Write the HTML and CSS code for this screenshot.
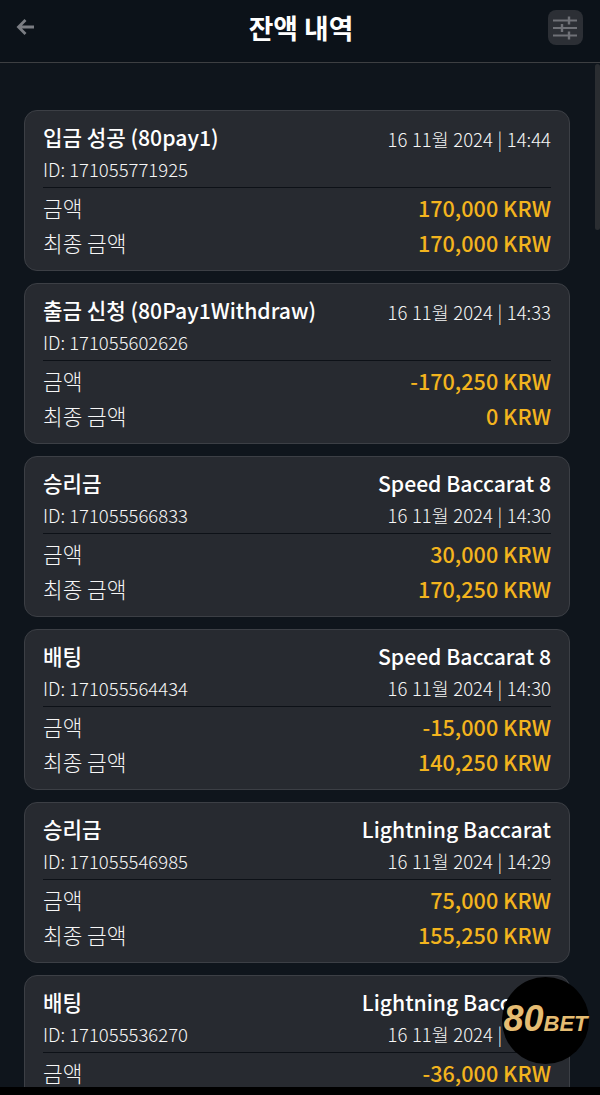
FILE: index.html
```html
<!DOCTYPE html>
<html>
	<head>
		<meta charset="UTF-8">
		<title>잔액 내역</title>
		<link rel="stylesheet" href="styles.css">
	</head>
	<body>
		<div class="page">
			<div class="header">
				<a class="back" href="#">
					<svg width="22" height="20" viewBox="0 0 22 20"><path d="M19 10H4M10.500 3L3.500 10L10.500 17" fill="none" stroke="#7b7d83" stroke-width="2.800"/></svg>
				</a>
				<h1>잔액 내역</h1>
				<a class="filter" href="#">
					<svg width="24" height="24" viewBox="0 0 24 24" fill="none" stroke="#6f7177" stroke-width="2">
						<path d="M0 4.500H24M0 12H24M0 19.500H24"/>
						<path d="M16 0.500V8.500M9 8V16M16 15.500V23.500" stroke-width="2.400"/>
					</svg>
				</a>
			</div>
			<div class="list">
				<div class="card">
					<div class="top">
						<div class="name">입금 성공 (80pay1)</div>
						<div class="date first">16 11월 2024 | 14:44</div>
					</div>
					<div class="id">ID: 171055771925</div>
					<div class="row"><span>금액</span><b>170,000 KRW</b></div>
					<div class="row"><span>최종 금액</span><b>170,000 KRW</b></div>
				</div>
				<div class="card">
					<div class="top">
						<div class="name">출금 신청 (80Pay1Withdraw)</div>
						<div class="date first">16 11월 2024 | 14:33</div>
					</div>
					<div class="id">ID: 171055602626</div>
					<div class="row"><span>금액</span><b>-170,250 KRW</b></div>
					<div class="row"><span>최종 금액</span><b>0 KRW</b></div>
				</div>
				<div class="card">
					<div class="top">
						<div class="name">승리금</div>
						<div class="name">Speed Baccarat 8</div>
					</div>
					<div class="id"><span>ID: 171055566833</span><span class="date">16 11월 2024 | 14:30</span></div>
					<div class="row"><span>금액</span><b>30,000 KRW</b></div>
					<div class="row"><span>최종 금액</span><b>170,250 KRW</b></div>
				</div>
				<div class="card">
					<div class="top">
						<div class="name">배팅</div>
						<div class="name">Speed Baccarat 8</div>
					</div>
					<div class="id"><span>ID: 171055564434</span><span class="date">16 11월 2024 | 14:30</span></div>
					<div class="row"><span>금액</span><b>-15,000 KRW</b></div>
					<div class="row"><span>최종 금액</span><b>140,250 KRW</b></div>
				</div>
				<div class="card">
					<div class="top">
						<div class="name">승리금</div>
						<div class="name">Lightning Baccarat</div>
					</div>
					<div class="id"><span>ID: 171055546985</span><span class="date">16 11월 2024 | 14:29</span></div>
					<div class="row"><span>금액</span><b>75,000 KRW</b></div>
					<div class="row"><span>최종 금액</span><b>155,250 KRW</b></div>
				</div>
				<div class="card">
					<div class="top">
						<div class="name">배팅</div>
						<div class="name">Lightning Baccarat</div>
					</div>
					<div class="id"><span>ID: 171055536270</span><span class="date">16 11월 2024 | 14:29</span></div>
					<div class="row"><span>금액</span><b>-36,000 KRW</b></div>
				</div>
			</div>
			<div class="scrollbar"></div>
			<div class="logo"><i>80</i><em>BET</em></div>
			<div class="navbar"></div>
		</div>
	</body>
</html>
```
FILE: styles.css
```css
*{margin: 0;padding: 0;box-sizing: border-box;}
html,body{height: 100%;background: #000;}
body{font-family: "Noto Sans CJK KR", "Noto Sans", sans-serif;color: #fff;overflow: hidden;}
a{text-decoration: none;}

.page{width: 600px;height: 1095px;position: relative;overflow: hidden;background: #0f151c;}

.header{height: 63px;border-bottom: 1px solid #3d3f42;display: flex;align-items: center;justify-content: space-between;padding: 0 17px 8px 15px;background: #0c1219;}
.header h1{font-size: 26.8px;font-weight: 700;line-height: 36px;margin-top: 2px;}
.back{display: flex;width: 39px;}
.filter{width: 35px;height: 35px;border-radius: 8px;background: #2c2f35;display: flex;align-items: center;justify-content: center;margin-top: 1px;}

.list{padding: 47px 30px 0 24px;display: flex;flex-direction: column;gap: 12px;}
.card{height: 161px;flex-shrink: 0;background: #272a30;border: 1px solid #3c3f45;border-radius: 13px;padding: 9px 18px 0;}

.top{display: flex;justify-content: space-between;align-items: center;height: 34px;}
.name{font-size: 21.2px;font-weight: 500;line-height: 28px;}
.date{font-size: 18.500px;font-weight: 300;line-height: 24px;word-spacing: 0.5px;color: #f6f6f6;}
.date.first{margin-top: 3px;}

.id{display: flex;justify-content: space-between;height: 34px;font-size: 18.5px;font-weight: 300;line-height: 30px;color: #f6f6f6;border-bottom: 1px solid #0d1117;}
.id .date{line-height: 30px;}

.row{display: flex;justify-content: space-between;align-items: center;height: 35px;font-size: 21.4px;line-height: 28px;}
.row:nth-child(3){margin-top: 2px;}
.row span{font-weight: 300;color: #f6f6f6;}
.row b{font-size: 21.6px;font-weight: 500;color: #f3b41e;}

.scrollbar{position: absolute;top: 64px;right: 0;width: 5px;height: 166px;border-radius: 3px;background: #2a2d31;}
.navbar{position: absolute;left: 0;right: 0;bottom: 0;height: 8px;background: #000;}

.logo{position: absolute;left: 502px;top: 977px;width: 87px;height: 87px;border-radius: 50%;background: #000;display: flex;align-items: baseline;justify-content: center;padding-top: 22px;color: #e5bc72;font-family: "Liberation Sans", sans-serif;font-weight: 700;font-style: italic;line-height: 40px;}
.logo i{font-size: 36px;}
.logo em{font-size: 22px;}
```
